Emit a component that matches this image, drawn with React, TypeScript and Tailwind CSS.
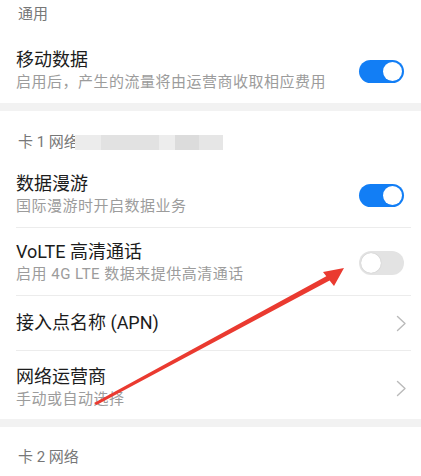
const font = { fontFamily: '"Roboto", "Noto Sans CJK SC", sans-serif' };

function Toggle({ on }: { on: boolean }) {
  return on ? (
    <div className="flex h-[23px] w-[45px] shrink-0 items-center justify-end rounded-full bg-[#127ef5] p-[2px]">
      <div className="h-[19px] w-[19px] rounded-full bg-white" />
    </div>
  ) : (
    <div className="flex h-[24px] w-[45px] shrink-0 items-center justify-start rounded-full bg-[#e3e3e3] p-[2px]">
      <div className="h-[20px] w-[20px] rounded-full bg-white shadow-[0_0_1px_rgba(0,0,0,0.25)]" />
    </div>
  );
}

function Row({
  title,
  sub,
  right,
  className = "",
}: {
  title: string;
  sub?: string;
  right: React.ReactNode;
  className?: string;
}) {
  return (
    <div className={`flex items-center justify-between pl-4 pr-[17px] ${className}`}>
      <div className="flex flex-col">
        <p className="text-[18px] leading-[22px] text-[#1c1c1c]">{title}</p>
        {sub ? (
          <p className="text-[15px] leading-[22px] tracking-[0.5px] text-[#9c9c9c]">{sub}</p>
        ) : null}
      </div>
      {right}
    </div>
  );
}

function Chevron() {
  return (
    <svg className="mr-[-3px]" width="11" height="17" viewBox="0 0 11 17" fill="none">
      <path d="M1.5 1.5 L9 8.5 L1.5 15.5" stroke="#bababa" strokeWidth="1.4" strokeLinecap="round" strokeLinejoin="round" />
    </svg>
  );
}

function Divider() {
  return <div className="ml-4 mr-[10px] h-px bg-[#ececec]" />;
}

function App() {
  return (
    <main className="relative h-[476px] w-[421px] overflow-hidden bg-white" style={font}>
      <header className="pl-[18px] pt-[3px] pb-[8px] text-[15px] leading-[22px] text-[#777]">通用</header>
      <Row title="移动数据" sub="启用后，产生的流量将由运营商收取相应费用" right={<Toggle on />} className="pt-[16px] pb-[10px]" />
      <div className="h-[8px] bg-[#f2f2f2]" />
      <header className="flex items-center pl-[18px] pt-[20px] pb-[7px] text-[15px] leading-[22px] text-[#777]">
        <span>卡 1 网络</span>
        <span className="-ml-[4px] flex h-[15px] w-[148px]">
          <span className="h-full w-[26px] bg-[#ececec]" />
          <span className="h-full w-[58px] bg-[#e2e2e2]" />
          <span className="h-full w-[16px] bg-[#ededed]" />
          <span className="h-full w-[24px] bg-[#dcdcdc]" />
          <span className="h-full w-[24px] bg-[#e6e6e6]" />
        </span>
      </header>
      <Row title="数据漫游" sub="国际漫游时开启数据业务" right={<Toggle on />} className="pt-[13px] pb-[10px]" />
      <Divider />
      <Row title="VoLTE 高清通话" sub="启用 4G LTE 数据来提供高清通话" right={<Toggle on={false} />} className="pt-[13px] pb-[10px]" />
      <Divider />
      <Row title="接入点名称 (APN)" right={<Chevron />} className="pt-[16px] pb-[16px]" />
      <Divider />
      <Row title="网络运营商" sub="手动或自动选择" right={<Chevron />} className="pt-[15px] pb-[9px]" />
      <div className="h-[8px] bg-[#f2f2f2]" />
      <header className="pl-[18px] pt-[19px] text-[15px] leading-[22px] text-[#777]">卡 2 网络</header>

      {/* red annotation arrow */}
      <svg className="pointer-events-none absolute left-0 top-0" width="421" height="476" viewBox="0 0 421 476">
        <polygon
          points="94,403 96.5,405 329.6,280.4 334,286 344,268 323,272 326.3,276.2"
          fill="#ea3a30"
        />
      </svg>
    </main>
  );
}

export default App;
